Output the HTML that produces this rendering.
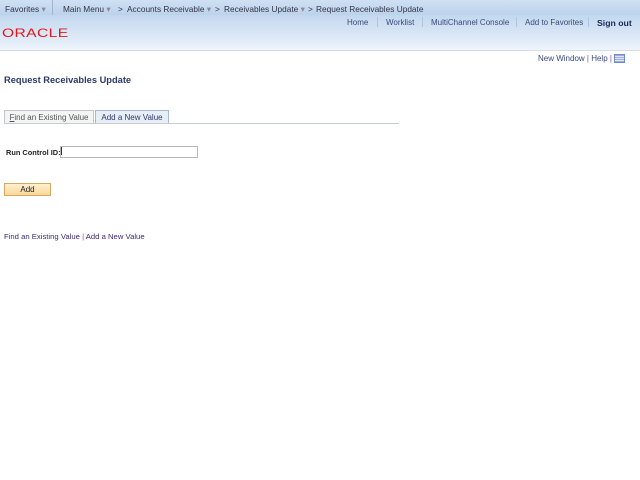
<!DOCTYPE html>
<html><head><style>
body{margin:0;width:640px;height:480px;background:#fff;font-family:"Liberation Sans",Arial,sans-serif;font-size:8px;position:relative;overflow:hidden}
.a{position:absolute;white-space:nowrap}
#bar{position:absolute;left:0;top:0;width:640px;height:15px;background:linear-gradient(#cfe0f2,#bcd3ec);color:#334}
#bar .a{top:4px;font-size:8.3px}
#hdr{position:absolute;left:0;top:15px;width:640px;height:35px;background:linear-gradient(#c2d8ef,#dbe8f6 60%,#eef4fb)}
#line{position:absolute;left:0;top:50px;width:640px;height:1px;background:#d8dde4}
.n{color:#3a4a7a}
.d{color:#889}
.sep{position:absolute;top:17px;width:1px;height:10px;background:#b0c4dc}
</style></head><body>
<div id="bar">
<span class="a" style="left:5px">Favorites <span class="d">▾</span></span>
<div style="position:absolute;left:52px;top:0;width:1px;height:15px;background:#9fb6d2"></div>
<span class="a" style="left:63px">Main Menu <span class="d">▾</span></span>
<span class="a" style="left:118px">&gt;</span>
<span class="a" style="left:127px">Accounts Receivable <span class="d">▾</span></span>
<span class="a" style="left:215px">&gt;</span>
<span class="a" style="left:224px">Receivables Update <span class="d">▾</span></span>
<span class="a" style="left:308px">&gt;</span>
<span class="a" style="left:316px">Request Receivables Update</span>
</div>
<div id="hdr"></div>
<div class="a" style="left:2px;top:26px;color:#e4141b;font-size:12px;letter-spacing:0.3px;transform:scaleX(1.3);transform-origin:left">ORACLE</div>
<span class="a n" style="left:347px;top:18px">Home</span><div class="sep" style="left:377px"></div>
<span class="a n" style="left:386px;top:18px">Worklist</span><div class="sep" style="left:422px"></div>
<span class="a n" style="left:431px;top:18px">MultiChannel Console</span><div class="sep" style="left:516px"></div>
<span class="a n" style="left:525px;top:18px">Add to Favorites</span><div class="sep" style="left:588px"></div>
<span class="a" style="left:597px;top:18px;font-weight:bold;color:#1a2a5a;font-size:8.7px">Sign out</span>
<div id="line"></div>
<span class="a n" style="left:538px;top:54px">New Window <span style="color:#8844aa">|</span> Help <span style="color:#8844aa">|</span></span>
<div style="position:absolute;left:614px;top:54px;width:9px;height:7px;border:1px solid #6a8acb;background:repeating-linear-gradient(#aac 0 1px,#dde8f8 1px 2px)"></div>
<div class="a" style="left:4px;top:75px;font-size:9.3px;font-weight:bold;color:#2a3a6a">Request Receivables Update</div>
<div style="position:absolute;left:4px;top:110px;width:88px;height:12px;border:1px solid #c0c8d4;border-bottom:none;background:#f4f4f4;color:#555;font-size:8px;text-align:center;line-height:13px"><u>F</u>ind an Existing Value</div>
<div style="position:absolute;left:95px;top:110px;width:72px;height:13px;border:1px solid #a8b8cc;border-bottom:none;background:#e8eef6;color:#2a3a6a;font-size:8px;text-align:center;line-height:13px">Add a New Value</div>
<div style="position:absolute;left:4px;top:123px;width:395px;height:1px;background:#c4ccd8"></div>
<span class="a" style="left:6px;top:148px;color:#222;font-weight:bold;font-size:7.4px">Run Control ID:</span>
<div style="position:absolute;left:60px;top:146px;width:136px;height:10px;border:1px solid #b8b8b8;background:#fff"></div>
<div style="position:absolute;left:61px;top:147px;width:1px;height:8px;background:#333"></div>
<div style="position:absolute;left:4px;top:183px;width:45px;height:11px;border:1px solid #d8a860;background:linear-gradient(#fff0d0,#f8d898);text-align:center;line-height:11px;color:#222;font-size:8px">Add</div>
<span class="a" style="left:4px;top:232px;color:#3a2a7a;font-size:7.7px">Find an Existing Value <span style="color:#aa44aa">|</span> Add a New Value</span>
</body></html>
